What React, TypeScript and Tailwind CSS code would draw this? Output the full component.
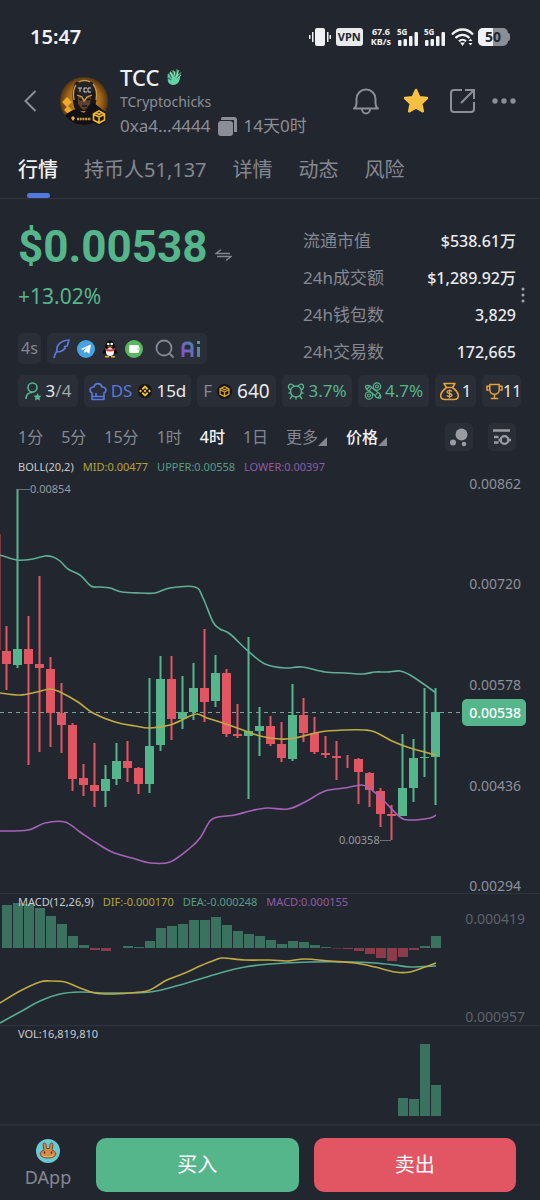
import type { ReactNode } from "react";

type Point = [number, number];
// [wick top, body top, body bottom, wick bottom, rising]
type Candle = [number, number, number, number, boolean];

const UP = "#56b68b";
const DOWN = "#e25563";
const STEP = 11;
const FIRST_X = 2;

const CANDLES: Candle[] = [
  [626, 651, 664, 690, false],
  [489, 649, 665, 668, true],
  [616, 649, 664, 765, false],
  [576, 664, 668, 752, false],
  [657, 669, 713, 747, false],
  [683, 713, 725, 753, false],
  [723, 725, 779, 791, false],
  [764, 778, 785, 796, false],
  [743, 785, 791, 807, false],
  [765, 779, 791, 807, true],
  [743, 761, 779, 785, true],
  [741, 761, 768, 782, false],
  [767, 768, 784, 794, false],
  [678, 746, 784, 793, true],
  [656, 679, 745, 751, true],
  [656, 679, 719, 740, false],
  [676, 712, 719, 729, true],
  [663, 688, 712, 720, true],
  [629, 688, 702, 722, false],
  [655, 673, 701, 707, true],
  [669, 673, 734, 737, false],
  [704, 734, 736, 738, false],
  [637, 731, 736, 799, true],
  [707, 726, 731, 756, true],
  [716, 726, 744, 746, false],
  [722, 744, 758, 762, false],
  [684, 715, 759, 761, true],
  [698, 715, 733, 742, false],
  [717, 733, 752, 754, false],
  [736, 753, 755, 758, false],
  [741, 756, 758, 780, false],
  [755, 758, 758, 768, false],
  [758, 759, 772, 804, false],
  [772, 773, 790, 807, false],
  [788, 791, 814, 827, false],
  [805, 814, 816, 840, false],
  [734, 788, 816, 816, true],
  [739, 758, 788, 802, true],
  [688, 757, 758, 777, true],
  [688, 712, 757, 805, true],
];

const UPPER: Point[] = [
  [0, 555], [17, 560], [33, 559], [45, 556], [53, 557], [60, 561], [68, 569], [80, 575], [91, 586], [100, 587],
  [110, 588], [122, 592], [140, 593], [155, 593], [170, 588], [195, 587], [203, 598], [213, 622], [220, 629],
  [230, 634], [248, 651], [265, 664], [285, 668], [302, 667], [325, 672], [345, 673], [363, 674], [375, 672],
  [387, 672], [400, 671], [410, 675], [425, 685], [436, 693],
];
const MID: Point[] = [
  [0, 693], [20, 695], [37, 692], [50, 689], [60, 692], [78, 702], [93, 713], [115, 722], [135, 726], [150, 728],
  [170, 725], [188, 717], [197, 714], [207, 718], [220, 722], [240, 729], [260, 736], [280, 739], [295, 738],
  [320, 732], [345, 730], [365, 730], [375, 732], [392, 741], [410, 748], [436, 755],
];
const LOWER: Point[] = [
  [0, 831], [28, 830], [45, 823], [65, 822], [80, 832], [95, 842], [112, 852], [132, 858], [150, 863], [170, 862],
  [190, 848], [200, 838], [210, 821], [218, 817], [235, 815], [250, 811], [267, 808], [288, 809], [305, 802],
  [325, 791], [345, 788], [362, 785], [372, 790], [385, 802], [400, 817], [410, 820], [430, 818], [436, 815],
];
const DIF: Point[] = [
  [0, 1003], [20, 991], [40, 982], [50, 981], [65, 982], [80, 988], [95, 993], [110, 994], [130, 993], [147, 991],
  [157, 986], [167, 980], [185, 973], [200, 966], [215, 960], [223, 958], [245, 960], [270, 960], [287, 961],
  [305, 959], [330, 961], [355, 963], [375, 967], [395, 972], [410, 972], [425, 967], [436, 963],
];
const DEA: Point[] = [
  [0, 1023], [20, 1012], [40, 1001], [60, 994], [80, 992], [110, 993], [150, 992], [180, 985], [220, 973],
  [245, 967], [270, 964], [310, 962], [350, 962], [375, 963], [395, 965], [410, 967], [436, 966],
];

// Bar heights, negative ones hang below the zero line
const MACD_BARS = [
  43, 45, 44, 40, 32, 24, 12, 3, -2, -3, 0, 2, 1, 7, 20, 22, 24, 28, 28, 31, 23, 17, 14, 12, 8, 4, 7, 6, 3, 1, -0.5, -1,
  -3, -6, -10, -13, -9, -2, 2, 12,
];
const MACD_ZERO = 948;

const VOLUME_BARS = [18, 17, 72, 31];

const TABS = ["行情", "持币人51,137", "详情", "动态", "风险"];
const STATS = [
  ["流通市值", "$538.61万"],
  ["24h成交额", "$1,289.92万"],
  ["24h钱包数", "3,829"],
  ["24h交易数", "172,665"],
];
const PERIODS = ["1分", "5分", "15分", "1时", "4时", "1日"];

// Catmull-Rom spline through the points
function smooth(points: Point[]) {
  let d = `M${points[0][0]} ${points[0][1]}`;
  for (let i = 0; i < points.length - 1; i++) {
    const p0 = points[i - 1] ?? points[i];
    const p1 = points[i];
    const p2 = points[i + 1];
    const p3 = points[i + 2] ?? p2;
    d += `C${p1[0] + (p2[0] - p0[0]) / 6} ${p1[1] + (p2[1] - p0[1]) / 6} ${p2[0] - (p3[0] - p1[0]) / 6} ${
      p2[1] - (p3[1] - p1[1]) / 6
    } ${p2[0]} ${p2[1]}`;
  }
  return d;
}

function StatusBar() {
  return (
    <div className="flex items-center justify-between pt-[22px] pr-[30px] pl-[30px] text-[#f1f2f5]">
      <span className="text-xl leading-[30px] font-semibold">15:47</span>
      <div className="flex items-center">
        <svg width="22" height="20" viewBox="0 0 22 20" fill="currentColor">
          <rect x="6" y="1" width="10" height="18" rx="2" />
          <path d="M3 5h1.500v10H3zM0 8h1.500v4H0zM18 5h1.500v10H18zM20.500 8H22v4h-1.500z" />
        </svg>
        <span className="ml-[5px] rounded-[3px] bg-[#e9eaed] px-[2px] text-[11px] leading-[18px] font-bold text-[#22272f]">
          VPN
        </span>
        <span className="ml-2 flex flex-col text-center text-[9px] leading-[10px] font-bold">
          <span>67.6</span>
          <span>KB/s</span>
        </span>
        <Signal />
        <Signal />
        <svg className="ml-[6px]" width="23" height="20" viewBox="0 0 23 20" fill="none" stroke="currentColor">
          <path d="M1 7.500C7 .8 16 .8 22 7.500M4.500 11c4-4.300 10-4.300 14 0M8 14.300c2-2 5-2 7 0" strokeWidth="2.300" />
          <path d="M9 15.500h5L11.500 19zM17.500 14l2-2.500 2 2.500zM17.500 16l2 2.500 2-2.500z" fill="currentColor" stroke="none" />
        </svg>
        <span className="relative ml-1 h-[18px] w-[30px] overflow-hidden rounded-[5px] bg-[#8b8e95] text-center text-sm leading-[18px] font-bold text-[#22272f]">
          <span className="absolute inset-y-0 left-0 w-1/2 bg-[#f1f2f5]" />
          <span className="relative">50</span>
        </span>
        <span className="h-2 w-[2px] rounded-r bg-[#8b8e95]" />
      </div>
    </div>
  );
}

function Signal() {
  return (
    <span className="ml-[6px] flex w-[21px] flex-col">
      <span className="text-[8px] leading-[8px] font-bold">5G</span>
      <svg className="-mt-1 ml-px" width="20" height="14" viewBox="0 0 20 14" fill="currentColor">
        <rect y="8" width="3.500" height="6" rx="1" />
        <rect x="5.500" y="7" width="3.500" height="7" rx="1" />
        <rect x="11" y="4" width="3.500" height="10" rx="1" />
        <rect x="16.500" y="0" width="3.500" height="14" rx="1" />
      </svg>
    </span>
  );
}

function Avatar() {
  return (
    <svg className="ml-[23px] shrink-0" width="48" height="48" viewBox="0 0 48 48">
      <defs>
        <clipPath id="avatar-clip">
          <circle cx="24" cy="24" r="24" />
        </clipPath>
        <radialGradient id="avatar-bg">
          <stop offset="0" stopColor="#e0a02c" />
          <stop offset="0.7" stopColor="#a2661a" />
          <stop offset="1" stopColor="#57350f" />
        </radialGradient>
      </defs>
      <g clipPath="url(#avatar-clip)">
        <rect width="48" height="48" fill="url(#avatar-bg)" />
        <path d="M7 20l5 5-5 5-5-5zM8 29l4 4-4 4-4-4z" fill="#f0a82c" />
        <path d="M16 5C10 13 13 30 16 34h17c5-9 5-23-1-29z" fill="#1a1718" />
        <path d="M0 48c3-11 9-13 16-16l8 4 9-10c8 4 12 8 15 22z" fill="#121014" />
        <path d="M18 19c3-2 10-2 13 0l-1 8-5 6-3-1-4-5z" fill="#5e4130" />
        <path d="M14 12C18 0 31 0 35 13c-5 4-7 6-10 10-4-5-7-6-11-11z" fill="#242327" />
        <path d="M16 8c-3 4-3 9-2 15M33 7c4 5 4 11 3 16M17 18l5 2 2 4 3-4 5-2M19 5c3-2 8-2 11 0" fill="none" stroke="#c79a4b" strokeWidth="1.300" />
        <path d="M18 11h4m-2 0v4M27 11h-3v4h3M31 11h-3v4h3" stroke="#d5d0c5" fill="none" />
        <path d="M19 22l3 1M27 23l3-1M22 29h5" stroke="#1b1111" strokeWidth="1.500" />
        <path d="M13 39l2 2-2 3-2-3z" fill="#e8b13b" />
        <path d="M17 42h14" stroke="#c99b3b" strokeWidth="2.500" strokeDasharray="2 .7" />
      </g>
      <circle cx="39" cy="40" r="8" fill="#1b1817" />
      <path d="M39 34l5.500 3v6L39 46l-5.500-3v-6zM34 37.500l5 2.500 5-2.500M39 40v5M36.500 36l2.500 1.500 2.500-1.500" fill="none" stroke="#efb52e" strokeWidth="1.600" />
    </svg>
  );
}

function Header() {
  return (
    <header className="flex items-center pt-3 pr-6 pl-6 text-[#8b8e97]">
      <button aria-label="返回" className="shrink-0">
        <svg width="13" height="22" viewBox="0 0 13 22" fill="none" stroke="currentColor" strokeWidth="2">
          <path d="M11.500 1L1.500 11l10 10" />
        </svg>
      </button>
      <Avatar />
      <div className="ml-3 flex-1 whitespace-nowrap">
        <h1 className="flex items-center gap-[7px] text-[22px] leading-[26px] font-medium text-[#f1f2f5]">
          TCC
          <svg width="17" height="18" viewBox="0 0 17 18">
            <path d="M2 10C1 5 2 5 4 7L4 3l3 3 0-4 3 3 2-4 0 5 3-2-1 5c0 5-3 8-7 8-4 0-6-4-5-7z" fill="#61d3a3" />
            <path d="M3 5l3 5M6 2l3 7M11 1L9 9M15 4l-4 7M1 9l4 3" stroke="#3a705f" strokeWidth="1.500" />
            <path d="M4 4l3 6M8 3l1 6M13 2l-3 7M15 7l-4 4" stroke="#a4e6c3" strokeWidth="0.800" />
          </svg>
        </h1>
        <p className="text-sm leading-6">TCryptochicks</p>
        <p className="flex items-center text-[17px] leading-6">
          0xa4...4444
          <button aria-label="复制" className="mx-[6px]">
            <svg width="21" height="21" viewBox="0 0 21 21">
              <path d="M5 1h12a3 3 0 0 1 3 3v12h-3V4H4c0-1 0-2 1-3z" fill="currentColor" />
              <rect x="1" y="5" width="15" height="15" rx="3" fill="currentColor" />
            </svg>
          </button>
          14天0时
        </p>
      </div>
      <div className="flex shrink-0 items-center">
        <button aria-label="提醒">
          <svg width="28" height="28" viewBox="0 0 28 28" fill="none" stroke="currentColor" strokeWidth="2">
            <path d="M2 21.500h24c-2-1.500-2.500-3-2.500-5V12a9.500 9.500 0 0 0-19 0v4.500c0 2-.5 3.500-2.500 5zM10 22c0 6 8 6 8 0" strokeLinejoin="round" />
          </svg>
        </button>
        <button aria-label="收藏" className="ml-[22px]">
          <svg width="28" height="28" viewBox="0 0 28 28">
            <path d="M14 3l3.300 7.200 7.700.9-5.700 5.400 1.500 7.800L14 20.500l-6.800 3.800 1.500-7.800L3 11.100l7.700-.9z" fill="#f7c042" stroke="#f7c042" strokeWidth="2.500" strokeLinejoin="round" />
          </svg>
        </button>
        <button aria-label="分享" className="ml-5">
          <svg width="25" height="26" viewBox="0 0 25 26" fill="none" stroke="currentColor" strokeWidth="2">
            <path d="M12 2H4a3 3 0 0 0-3 3v16a3 3 0 0 0 3 3h17a3 3 0 0 0 3-3v-7M15 2h9v9M24 2L11 15" />
          </svg>
        </button>
        <button aria-label="更多操作" className="ml-[17px]">
          <svg width="24" height="6" viewBox="0 0 24 6" fill="currentColor">
            <circle cx="3" cy="3" r="2.700" />
            <circle cx="12" cy="3" r="2.700" />
            <circle cx="21" cy="3" r="2.700" />
          </svg>
        </button>
      </div>
    </header>
  );
}

function Tabs() {
  return (
    <nav className="flex gap-[26px] border-b border-[#30353d] pt-[17px] pl-[18px] text-xl leading-[30px] text-[#858891]">
      {TABS.map((tab, i) => (
        <button key={tab} className={i === 0 ? "font-medium text-[#f1f2f5]" : ""}>
          {tab}
          <span className={i === 0 ? "mx-auto mt-2 block h-[5px] w-[23px] rounded-sm bg-[#5277e0]" : "mt-2 block h-[5px]"} />
        </button>
      ))}
    </nav>
  );
}

function SocialPills() {
  return (
    <div className="mt-[23px] flex gap-[6px]">
      <span className="rounded-[5px] bg-[#292e37] px-[3px] text-base leading-[31px] text-[#858891]">4s</span>
      <div className="flex h-[31px] items-center rounded-[5px] bg-[#292e37] pr-[6px] pl-[6px]">
        <svg width="17" height="20" viewBox="0 0 17 20" fill="none" stroke="#5b78dd" strokeWidth="1.700">
          <path d="M1 19C1.500 16 2.500 14 4 12C3 6 8 1.500 16 1c-1.200 2.500-.6 3.800-2 6l-2.500.5.7 1.500C10 12 7.500 13 4 13" strokeLinejoin="round" />
        </svg>
        <svg className="ml-[7px]" width="18" height="18" viewBox="0 0 18 18">
          <circle cx="9" cy="9" r="9" fill="#47a4e3" />
          <path d="M3.500 9L14 4.500l-1.700 9.300-3.200-2.300-1.500 1.700-.5-3 4.500-3.500-5.300 3z" fill="#fff" />
        </svg>
        <svg className="ml-[7px]" width="16" height="18" viewBox="0 0 16 18">
          <path d="M3 8c0-10 10-10 10 0 2 3 3 5 2 6l-2-1c-1 3-9 3-10 0l-2 1c-1-1 0-3 2-6z" fill="#0b0d10" />
          <ellipse cx="8" cy="12" rx="4" ry="4" fill="#f4f4f4" />
          <path d="M3 8q5 3 10 0v2q-5 3-10 0z" fill="#d8343a" />
          <circle cx="6.300" cy="4" r="1.300" fill="#fff" />
          <circle cx="9.700" cy="4" r="1.300" fill="#fff" />
          <path d="M5 6.500h6L8 8zM3 16h4v1.500H3zM9 16h4v1.500H9z" fill="#f1aa32" />
        </svg>
        <svg className="ml-[7px]" width="18" height="18" viewBox="0 0 18 18">
          <circle cx="9" cy="9" r="9" fill="#59b85e" />
          <rect x="4" y="5" width="10" height="8" rx="1.500" fill="#fff" />
          <path d="M12 7.500h3v3h-3z" fill="#bfe6c1" />
        </svg>
        <svg className="ml-3" width="20" height="20" viewBox="0 0 20 20" fill="none" stroke="#858891" strokeWidth="1.800">
          <circle cx="9" cy="9" r="7.500" />
          <path d="M14.500 14.500l4 4" />
        </svg>
        <svg className="ml-[6px]" width="20" height="16" viewBox="0 0 20 16" fill="none" strokeWidth="3">
          <defs>
            <linearGradient id="ai" x1="0" y1="16" x2="20" y2="0" gradientUnits="userSpaceOnUse">
              <stop offset="0" stopColor="#9746cf" />
              <stop offset="0.550" stopColor="#5876b7" />
              <stop offset="1" stopColor="#4ea59a" />
            </linearGradient>
          </defs>
          <path d="M2 16V6q0-4 4.500-4T11 6v10M2 10h9M17.500 6v10M17.500 0v3" stroke="url(#ai)" />
        </svg>
      </div>
    </div>
  );
}

function Overview() {
  return (
    <section className="relative flex justify-between pr-6 pb-px pl-[18px]">
      <div className="pt-6">
        <div className="flex items-center gap-2 text-[#858891]">
          <span className="text-[44px] leading-[48px] font-bold text-[#56b68b] [font-family:Roboto,sans-serif]">
            $0.00538
          </span>
          <svg className="mt-4" width="17" height="14" viewBox="0 0 17 14" fill="none" stroke="currentColor" strokeWidth="1.400">
            <path d="M15 5.500H1l5-4M2 8.500h14l-5 4" />
          </svg>
        </div>
        <div className="mt-[11px] text-[21px] leading-7 text-[#56b68b]">+13.02%</div>
        <SocialPills />
      </div>
      <dl className="w-[213px] pt-[23px] leading-[37px]">
        {STATS.map(([label, value]) => (
          <div key={label} className="flex h-[37px] items-baseline justify-between">
            <dt className="text-[17px] text-[#858891]">{label}</dt>
            <dd className="text-[16px] font-medium text-[#e9eaee]">{value}</dd>
          </div>
        ))}
      </dl>
      <svg className="absolute right-[15px] bottom-[68px]" width="4" height="16" viewBox="0 0 4 16" fill="#a3a5ab">
        <circle cx="2" cy="2" r="1.500" />
        <circle cx="2" cy="8" r="1.500" />
        <circle cx="2" cy="14" r="1.500" />
      </svg>
    </section>
  );
}

function Pill({ className, children }: { className: string; children: ReactNode }) {
  return (
    <span className={`flex h-8 shrink-0 items-center rounded-[5px] bg-[#292e37] ${className}`}>{children}</span>
  );
}

function BadgePills() {
  return (
    <div className="mr-[18px] ml-[18px] flex gap-[6px] overflow-hidden pt-1 text-[17px] text-[#e9eaee]">
      <Pill className="w-[60px] justify-center gap-1">
        <svg width="17" height="19" viewBox="0 0 17 19" fill="none" stroke="#56b68b" strokeWidth="1.600">
          <circle cx="7.500" cy="5.500" r="4.500" />
          <path d="M1 17c0-4 2.500-6.500 6.500-6.500" />
          <path d="M12.500 11l1.200 2.500 2.800.3-2 2 .5 2.700-2.500-1.300-2.500 1.300.5-2.700-2-2 2.800-.3z" fill="#56b68b" stroke="none" />
        </svg>
        <span>
          3<span className="text-[#a3a5ab]">/4</span>
        </span>
      </Pill>
      <Pill className="w-[107px] justify-center">
        <svg width="18" height="19" viewBox="0 0 18 19" fill="none" stroke="#5b78dd" strokeWidth="1.600" strokeLinejoin="round">
          <path d="M3 17.500V11C-.5 9 1 4.500 5 5c1-4.500 7-4.500 8 0 4-.5 5.500 4 2 6v6.500zM3.500 14.500h11M7 14v-3" />
        </svg>
        <span className="mr-[6px] ml-1 text-[#5b78dd]">DS</span>
        <svg width="14" height="14" viewBox="0 0 14 14" fill="#edbd37">
          <circle cx="7" cy="7" r="7" fill="#15130d" />
          <path d="M7 1.200l3.400 3.400L9 6 7 4 5 6 3.600 4.600zM7 12.800l3.400-3.400L9 8l-2 2-2-2-1.400 1.400zM7 5.500L8.500 7 7 8.500 5.500 7zM2.500 5.500L4 7 2.500 8.500 1 7zM11.500 5.500L13 7l-1.500 1.500L10 7z" />
        </svg>
        <span className="ml-1">15d</span>
      </Pill>
      <Pill className="w-[79px] justify-center gap-[5px]">
        <span className="text-[#858891]">F</span>
        <svg width="15" height="15" viewBox="0 0 15 15" fill="none" stroke="#d9a22d" strokeWidth="1.300">
          <circle cx="7.500" cy="7.500" r="7.500" fill="#15130d" stroke="none" />
          <path d="M7.500 2.500l4.500 2.500v5l-4.500 2.500L3 10V5zM3 5.500L7.500 8 12 5.500M7.500 8v4M5 4.500l2.500 1.300L10 4.500" />
        </svg>
        <span className="text-[19px]">640</span>
      </Pill>
      <Pill className="w-[70px] justify-center gap-[3px] text-[#56b68b]">
        <svg width="18" height="18" viewBox="0 0 18 18" fill="none" stroke="currentColor" strokeWidth="1.400">
          <circle cx="9" cy="9.500" r="5.500" />
          <path d="M3.500 8C-1 5 3-1 7 4M14.500 8C19 5 15-1 11 4M5 14l-2 3M13 14l2 3M3.500 11H1.500M14.500 11h2M9 15v2.500" />
        </svg>
        3.7%
      </Pill>
      <Pill className="w-[71px] justify-center gap-[3px] text-[#56b68b]">
        <svg width="18" height="18" viewBox="0 0 18 18" fill="none" stroke="currentColor" strokeWidth="1.200">
          <circle cx="13" cy="4.500" r="3.700" />
          <circle cx="13" cy="4.500" r="1.500" />
          <circle cx="5" cy="13.500" r="3.700" />
          <circle cx="5" cy="13.500" r="1.500" />
          <path d="M1.500 4q4-2 7 2l5 4q4 2 3 6-4 1-6-3l-5-4q-4-1-4-5zM3 7l3-3M5 9l3-4M14 16l2-3M11 14l3-4" />
        </svg>
        4.7%
      </Pill>
      <Pill className="w-[41px] justify-center gap-[3px]">
        <svg width="19" height="19" viewBox="0 0 19 19" fill="none" stroke="#e5a13a" strokeWidth="1.600">
          <path d="M4 1.500h11l-2.500 4h-6zM6.500 5.500C-1 11-1 17.500 5 17.500h9c6 0 6-6.500-1.500-12z" strokeLinejoin="round" />
          <path d="M12 9.500c-1-1.500-5-1.500-5 .5s5 1 5 3-4 2-5 .3M9.500 7.500v9" strokeWidth="1.300" />
        </svg>
        1
      </Pill>
      <Pill className="pl-1 text-[16px]">
        <svg width="17" height="17" viewBox="0 0 18 17" fill="none" stroke="#e5a13a" strokeWidth="1.600">
          <path d="M4 1h10v6c0 6-10 6-10 0zM4 3H1v4h2M14 3h3v4h-2M9 11v4M5 16h8" />
        </svg>
        11
      </Pill>
    </div>
  );
}

function Corner() {
  return (
    <svg className="mt-2" width="10" height="9" viewBox="0 0 10 9" fill="#858891">
      <path d="M9 0v9H0z" />
    </svg>
  );
}

function PeriodBar() {
  return (
    <div className="mt-4 flex items-center justify-between pr-6 pl-[18px] text-base leading-7 text-[#858891]">
      <div className="flex gap-[18px]">
        {PERIODS.map((p) => (
          <button key={p} className={p === "4时" ? "font-medium text-[#f1f2f5]" : ""}>
            {p}
          </button>
        ))}
        <button className="flex items-center">
          更多
          <Corner />
        </button>
        <button className="flex items-center font-medium text-[#f1f2f5]">
          价格
          <Corner />
        </button>
      </div>
      <div className="flex gap-[15px]">
        <button aria-label="气泡图" className="flex h-7 w-7 items-center justify-center rounded-[5px] bg-[#292e37]">
          <svg width="20" height="20" viewBox="0 0 20 20" fill="#9a9ca4">
            <circle cx="12.500" cy="7.500" r="6" />
            <circle cx="4" cy="15.500" r="3" />
            <circle cx="15" cy="17" r="2.300" />
          </svg>
        </button>
        <button aria-label="指标设置" className="flex h-7 w-7 items-center justify-center rounded-[5px] bg-[#292e37]">
          <svg width="18" height="18" viewBox="0 0 18 18" fill="none" stroke="#9a9ca4" strokeWidth="2.300">
            <path d="M0 2.500h17M1 9h4.500M1 14.500h4.500" />
            <circle cx="11.500" cy="12" r="3.800" />
            <path d="M5.500 12h2M16 12h2" />
          </svg>
        </button>
      </div>
    </div>
  );
}

function PriceChart() {
  return (
    <section className="mt-2">
      <div className="flex gap-[9px] pl-[18px] text-[11px] leading-4 whitespace-nowrap">
        <span className="text-[#c9cbd0]">BOLL(20,2)</span>
        <span className="text-[#b3a43f]">MID:0.00477</span>
        <span className="text-[#559e83]">UPPER:0.00558</span>
        <span className="text-[#915aa5]">LOWER:0.00397</span>
      </div>
      <svg className="block w-full overflow-visible" viewBox="0 475 540 418" fill="none">
        <path d="M0.500 534v116" stroke="#7b3943" />
        <path d="M0 712.500h462" stroke="#79a597" strokeDasharray="4 4" />
        {CANDLES.map(([high, top, bottom, low, up], i) => (
          <g key={i} fill={up ? UP : DOWN}>
            <rect x={FIRST_X + i * STEP + 3.5} y={high} width="2" height={low - high} />
            <rect x={FIRST_X + i * STEP} y={top} width="9" height={bottom - top} />
          </g>
        ))}
        <path d={smooth(UPPER)} stroke="#5fae95" strokeWidth="1.600" />
        <path d={smooth(MID)} stroke="#c0aa43" strokeWidth="1.600" />
        <path d={smooth(LOWER)} stroke="#a562b8" strokeWidth="1.600" />
        <path d="M18 489.500h12M380 840.500h11" stroke="#6b6e76" />
        <g className="text-[11px]" fill="#9799a0">
          <text x="30" y="493">0.00854</text>
          <text x="339" y="844">0.00358</text>
        </g>
        <g className="text-sm" fill="#8d9098" textAnchor="end">
          <text x="521" y="489">0.00862</text>
          <text x="521" y="589">0.00720</text>
          <text x="521" y="690">0.00578</text>
          <text x="521" y="791">0.00436</text>
          <text x="521" y="891">0.00294</text>
        </g>
        <rect x="462" y="699" width="64" height="27" rx="5" fill={UP} />
        <text className="text-sm font-medium" x="521" y="718" fill="#fff" textAnchor="end">
          0.00538
        </text>
      </svg>
    </section>
  );
}

function MacdChart() {
  return (
    <section className="relative border-t border-[#30353d]">
      <svg className="block w-full overflow-visible" viewBox="0 894 540 131" fill="none">
        {MACD_BARS.map((h, i) => (
          <rect
            key={i}
            x={FIRST_X + i * STEP}
            y={h > 0 ? MACD_ZERO - h : MACD_ZERO}
            width="10"
            height={Math.abs(h)}
            fill={h > 0 ? "#3b725f" : "#8b3c4b"}
          />
        ))}
        <path d={smooth(DEA)} stroke="#57ab92" strokeWidth="1.600" />
        <path d={smooth(DIF)} stroke="#c0aa43" strokeWidth="1.600" />
        <g className="text-sm" fill="#5d6169" textAnchor="end">
          <text x="525" y="924">0.000419</text>
          <text x="525" y="1022">0.000957</text>
        </g>
      </svg>
      <div className="absolute top-0 left-[18px] flex gap-[9px] text-[11px] leading-4 whitespace-nowrap">
        <span className="text-[#c9cbd0]">MACD(12,26,9)</span>
        <span className="text-[#b3a43f]">DIF:-0.000170</span>
        <span className="text-[#559e83]">DEA:-0.000248</span>
        <span className="text-[#915aa5]">MACD:0.000155</span>
      </div>
    </section>
  );
}

function VolumeChart() {
  return (
    <section className="border-t border-[#30353d]">
      <div className="pl-[18px] text-[11px] leading-4 text-[#c9cbd0]">VOL:16,819,810</div>
      <svg className="block w-full" viewBox="0 0 540 82" fill="#3b725f">
        {VOLUME_BARS.map((h, i) => (
          <rect key={i} x={FIRST_X + (36 + i) * STEP} y={74 - h} width="10" height={h} />
        ))}
      </svg>
    </section>
  );
}

function Footer() {
  return (
    <footer className="flex items-center border-t-2 border-[#2b3038] pt-3 pr-6 pb-2 text-xl text-white">
      <a href="#dapp" className="flex w-24 flex-col items-center text-lg leading-7 text-[#858891]">
        <svg width="24" height="24" viewBox="0 0 24 24">
          <circle cx="12" cy="12" r="12" fill="#6bc9d2" />
          <path d="M8 11L7 5.500c0-2 2.500-2 3 0l.5 4h3l.5-4c.5-2 3-2 3 0L16 11c6 2 5 8-4 8s-10-6-4-8z" fill="#d78c45" stroke="#6e4a34" />
          <path d="M6 16c3 2 9 2 12 0-1 3-11 3-12 0z" fill="#f0c98d" />
          <path d="M8.500 12.500v2M15.500 12.500v2" stroke="#4b2c1c" strokeWidth="1.500" />
        </svg>
        DApp
      </a>
      <button className="h-[54px] flex-1 rounded-[10px] bg-[#56b68b]">买入</button>
      <button className="ml-[15px] h-[54px] flex-1 rounded-[10px] bg-[#e25563]">卖出</button>
    </footer>
  );
}

export default function App() {
  return (
    <div className="min-h-screen bg-[#22272f] [font-family:'Noto_Sans','Noto_Sans_CJK_SC',sans-serif]">
      <StatusBar />
      <Header />
      <Tabs />
      <Overview />
      <BadgePills />
      <PeriodBar />
      <PriceChart />
      <MacdChart />
      <VolumeChart />
      <Footer />
    </div>
  );
}
